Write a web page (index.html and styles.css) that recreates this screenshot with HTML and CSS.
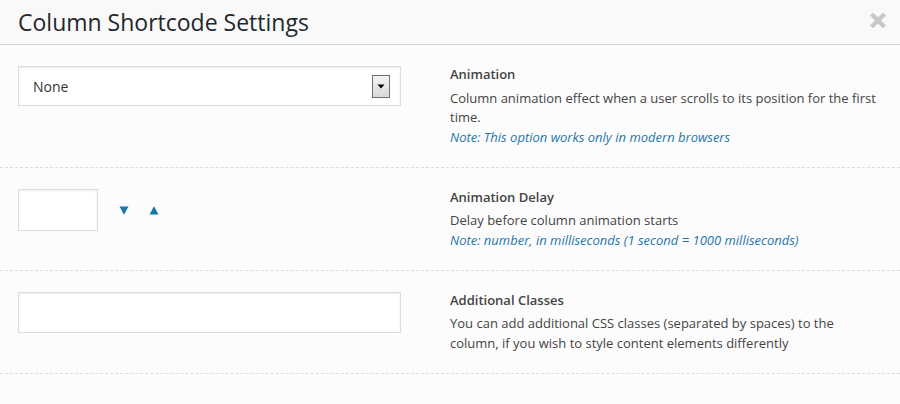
FILE: index.html
```html
<!DOCTYPE html>
<html>
<head>
<meta charset="utf-8">
<title>Column Shortcode Settings</title>
<link rel="stylesheet" href="styles.css">
</head>
<body>
<div class="modal">
  <div class="modal-header">
    <h1 class="modal-title">Column Shortcode Settings</h1>
    <span class="close" aria-label="Close">
      <svg width="16" height="15" viewBox="0 0 16 15"><path d="M3 2.5 L13 12.5 M13 2.5 L3 12.5" stroke="#c8c8c8" stroke-width="4.2" stroke-linecap="square" fill="none"/></svg>
    </span>
  </div>
  <div class="modal-body">
    <div class="row">
      <div class="field">
        <div class="select">
          <span class="select-value">None</span>
          <span class="select-btn"><svg width="8" height="5" viewBox="0 0 8 5"><path d="M0.5 0.5 H7.5 L4 4.5 Z" fill="#000"/></svg></span>
        </div>
      </div>
      <div class="info">
        <div class="label">Animation</div>
        <div class="desc">Column animation effect when a user scrolls to its position for the first time.</div>
        <div class="note">Note: This option works only in modern browsers</div>
      </div>
    </div>
    <div class="row">
      <div class="field">
        <div class="number-wrap">
          <div class="input input-number"></div>
          <span class="spin spin-down"><svg width="10" height="9" viewBox="0 0 10 9"><path d="M0.5 0.5 H9.5 L5 8.8 Z" fill="#1576aa"/></svg></span>
          <span class="spin spin-up"><svg width="10" height="9" viewBox="0 0 10 9"><path d="M0.5 8.5 H9.5 L5 0.2 Z" fill="#1576aa"/></svg></span>
        </div>
      </div>
      <div class="info">
        <div class="label">Animation Delay</div>
        <div class="desc">Delay before column animation starts</div>
        <div class="note">Note: number, in milliseconds (1 second = 1000 milliseconds)</div>
      </div>
    </div>
    <div class="row">
      <div class="field">
        <div class="input input-text"></div>
      </div>
      <div class="info">
        <div class="label">Additional Classes</div>
        <div class="desc">You can add additional CSS classes (separated by spaces) to the column, if you wish to style content elements differently</div>
      </div>
    </div>
  </div>
</div>
</body>
</html>
```

FILE: styles.css
```css
html, body {
  margin: 0;
  padding: 0;
}
body {
  background: #fcfcfc;
  font-family: "Open Sans", "Noto Sans", sans-serif;
  color: #444;
  width: 900px;
  height: 404px;
  overflow: hidden;
}
.modal-header {
  height: 44px;
  background: #f9f9f9;
  border-bottom: 1px solid #d6d6d6;
  display: flex;
  align-items: center;
  justify-content: space-between;
  padding: 0 14px 0 18px;
}
.modal-title {
  margin: 0;
  font-size: 23px;
  font-weight: 400;
  line-height: 44px;
  color: #23282d;
}
.close {
  display: flex;
  margin-top: -3px;
}
.row {
  display: grid;
  grid-template-columns: 450px 1fr;
  border-bottom: 1px dashed #dcdcdc;
}
.field {
  padding: 21px 0 0 18px;
}
.info {
  padding: 20px 18px 19.5px 0;
  font-size: 13px;
  line-height: 19.5px;
}
.label {
  font-weight: 600;
  color: #444;
  margin-bottom: 4px;
}
.desc {
  color: #444;
}
.note {
  color: #1f77ad;
  font-style: italic;
}
.select {
  box-sizing: border-box;
  width: 383px;
  height: 40px;
  background: #fff;
  border: 1px solid #dcdcdc;
  box-shadow: inset 0 1px 2px rgba(0,0,0,0.07);
  display: flex;
  align-items: center;
  justify-content: space-between;
  padding: 0 10px 0 14px;
}
.select-value {
  font-size: 14px;
  color: #333;
}
.select-btn {
  box-sizing: border-box;
  width: 18px;
  height: 23px;
  border: 1px solid #707070;
  background: linear-gradient(#f4f4f4, #d8d8d8);
  display: flex;
  align-items: center;
  justify-content: center;
  margin-top: 1px;
}
.input {
  box-sizing: border-box;
  height: 42px;
  background: #fff;
  border: 1px solid #dcdcdc;
  box-shadow: inset 0 1px 2px rgba(0,0,0,0.07);
}
.input-number {
  width: 80px;
}
.input-text {
  width: 383px;
  height: 41px;
}
.number-wrap {
  display: flex;
  align-items: center;
}
.spin {
  display: flex;
  margin-top: 1px;
}
.spin-down {
  margin-left: 21px;
}
.spin-up {
  margin-left: 20px;
}
```
